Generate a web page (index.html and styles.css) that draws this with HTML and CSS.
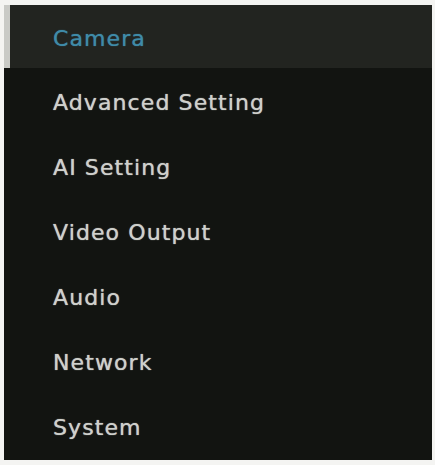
FILE: index.html
```html
<!DOCTYPE html>
<html>
<head>
<meta charset="utf-8">
<link rel="stylesheet" href="styles.css">
</head>
<body>
<nav class="menu">
  <div class="item active">Camera</div>
  <div class="item">Advanced Setting</div>
  <div class="item">AI Setting</div>
  <div class="item">Video Output</div>
  <div class="item">Audio</div>
  <div class="item">Network</div>
  <div class="item">System</div>
</nav>
</body>
</html>
```

FILE: styles.css
```css
html, body {
  margin: 0;
  padding: 0;
  background: #f4f4f2;
}
body {
  padding: 5px 3px 5px 4px;
  width: 435px;
  height: 465px;
  box-sizing: border-box;
}
.menu {
  background: #121411;
  display: flex;
  flex-direction: column;
  height: 455px;
}
.item {
  height: 65px;
  display: flex;
  align-items: center;
  padding-left: 49px;
  padding-top: 4px;
  font-family: "DejaVu Sans", sans-serif;
  font-size: 22px;
  letter-spacing: 1.1px;
  color: #cfd0cc;
  text-shadow: 0 0 1px rgba(207, 208, 204, 0.9);
  box-sizing: border-box;
}
.item.active {
  background: #222420;
  color: #3f8ba8;
  text-shadow: 0 0 1px rgba(63, 139, 168, 0.9);
  height: 63px;
  border-left: 6px solid #c9cac6;
  padding-left: 43px;
}
```
